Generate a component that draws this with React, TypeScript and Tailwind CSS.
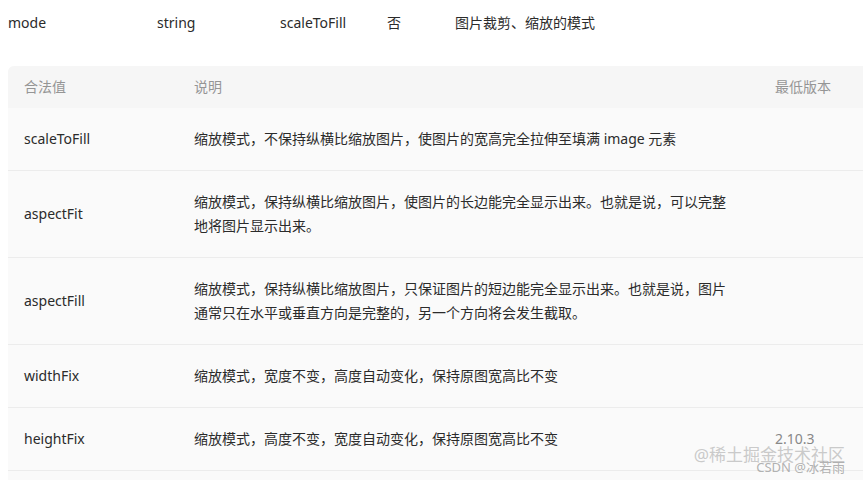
const rows: { name: string; desc: string; ver?: string }[] = [
  { name: "scaleToFill", desc: "缩放模式，不保持纵横比缩放图片，使图片的宽高完全拉伸至填满 image 元素" },
  { name: "aspectFit", desc: "缩放模式，保持纵横比缩放图片，使图片的长边能完全显示出来。也就是说，可以完整地将图片显示出来。" },
  { name: "aspectFill", desc: "缩放模式，保持纵横比缩放图片，只保证图片的短边能完全显示出来。也就是说，图片通常只在水平或垂直方向是完整的，另一个方向将会发生截取。" },
  { name: "widthFix", desc: "缩放模式，宽度不变，高度自动变化，保持原图宽高比不变" },
  { name: "heightFix", desc: "缩放模式，高度不变，宽度自动变化，保持原图宽高比不变", ver: "2.10.3" },
];

export default function App() {
  return (
    <div
      className="relative h-[480px] w-[863px] overflow-hidden bg-white text-[14px] text-[#2b2b2b]"
      style={{ fontFamily: '"Noto Sans", "Noto Sans CJK SC", sans-serif' }}
    >
      <div className="flex h-[46px] items-center leading-6">
        <span className="w-[157px] pl-2">mode</span>
        <span className="w-[123px]">string</span>
        <span className="w-[107px]">scaleToFill</span>
        <span className="w-[68px]">否</span>
        <span>图片裁剪、缩放的模式</span>
      </div>

      <div className="ml-2 mt-5 w-[880px] overflow-hidden rounded-tl-md bg-[#fafafa]">
        <div className="flex bg-[#f6f6f6] leading-6 text-[#959595]">
          <div className="w-[170px] shrink-0 px-4 py-[9px]">合法值</div>
          <div className="w-[581px] shrink-0 px-4 py-[9px]">说明</div>
          <div className="flex-1 px-4 py-[9px]">最低版本</div>
        </div>
        {rows.map((r) => (
          <div key={r.name} className="flex items-center border-b border-[#ececec] leading-6">
            <div className="w-[170px] shrink-0 px-4 py-[19px]">{r.name}</div>
            <div className="w-[581px] shrink-0 px-4 py-[19px]">
              <p className="w-[540px]">{r.desc}</p>
            </div>
            <div className="flex-1 px-4 py-[19px] text-[#888]">{r.ver}</div>
          </div>
        ))}
        <div className="h-6" />
      </div>

      {/* watermarks */}
      <div className="absolute right-[18px] top-[445px] text-[17px] leading-5 text-[#c4c4c4]/90">@稀土掘金技术社区</div>
      <div className="absolute right-[18px] top-[459px] text-[13px] leading-4 text-[#a8a8a8]/90">CSDN @冰若雨</div>
    </div>
  );
}
